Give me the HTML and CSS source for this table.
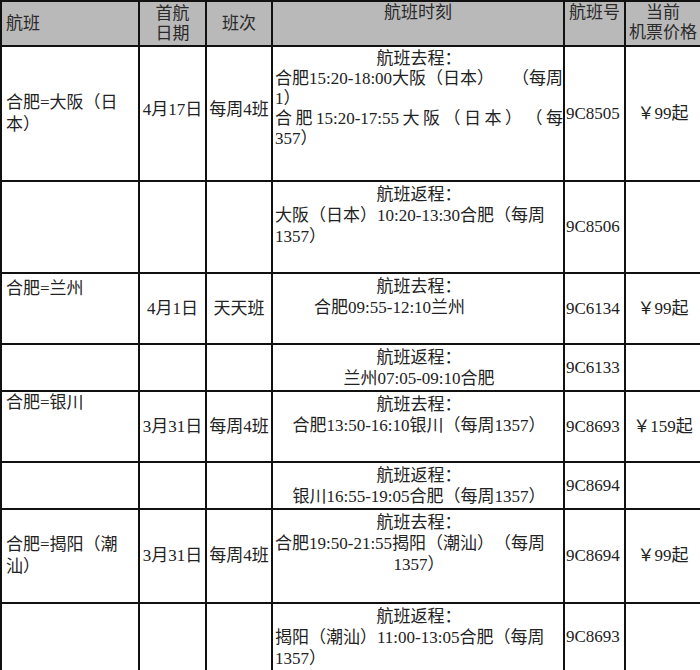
FILE: index.html
```html
<!DOCTYPE html>
<html lang="zh-CN">
<head>
<meta charset="utf-8">
<title>航班时刻表</title>
<link rel="stylesheet" href="styles.css">
</head>
<body>
<table class="sched">
  <colgroup>
    <col class="c-route">
    <col class="c-date">
    <col class="c-freq">
    <col class="c-time">
    <col class="c-no">
    <col class="c-price">
  </colgroup>
  <thead>
    <tr class="h-head">
      <th class="left mid">航班</th>
      <th class="mid">首航<br>日期</th>
      <th class="mid">班次</th>
      <th class="top">航班时刻</th>
      <th class="top">航班号</th>
      <th class="top">当前<br>机票价格</th>
    </tr>
  </thead>
  <tbody>
    <tr class="h-r1">
      <td class="route mid">合肥=大阪（日本）</td>
      <td class="mid up">4月17日</td>
      <td class="mid up">每周4班</td>
      <td class="time tight">
        <div class="ct">航班去程：</div>
        <div class="split"><span>合肥15:20-18:00大阪（日本）</span><span>（每周</span></div>
        <div>1）</div>
        <div class="just">合肥15:20-17:55大阪（日本）（每</div>
        <div>357）</div>
      </td>
      <td class="no mid">9C8505</td>
      <td class="price mid">￥99起</td>
    </tr>
    <tr class="h-r2">
      <td></td>
      <td></td>
      <td></td>
      <td class="time">
        <div class="ct">航班返程：</div>
        <div>大阪（日本）10:20-13:30合肥（每周</div>
        <div>1357）</div>
      </td>
      <td class="no mid">9C8506</td>
      <td></td>
    </tr>
    <tr class="h-r3">
      <td class="route top r-top">合肥=兰州</td>
      <td class="mid">4月1日</td>
      <td class="mid">天天班</td>
      <td class="time">
        <div class="ct">航班去程：</div>
        <div class="ind">合肥09:55-12:10兰州</div>
      </td>
      <td class="no mid">9C6134</td>
      <td class="price mid">￥99起</td>
    </tr>
    <tr class="h-r4">
      <td></td>
      <td></td>
      <td></td>
      <td class="time">
        <div class="ct">航班返程：</div>
        <div class="ct">兰州07:05-09:10合肥</div>
      </td>
      <td class="no mid">9C6133</td>
      <td></td>
    </tr>
    <tr class="h-r5">
      <td class="route top r-top2">合肥=银川</td>
      <td class="mid">3月31日</td>
      <td class="mid">每周4班</td>
      <td class="time">
        <div class="ct">航班去程：</div>
        <div class="ct">合肥13:50-16:10银川（每周1357）</div>
      </td>
      <td class="no mid">9C8693</td>
      <td class="price mid">￥159起</td>
    </tr>
    <tr class="h-r6">
      <td></td>
      <td></td>
      <td></td>
      <td class="time">
        <div class="ct">航班返程：</div>
        <div class="ct">银川16:55-19:05合肥（每周1357）</div>
      </td>
      <td class="no mid">9C8694</td>
      <td></td>
    </tr>
    <tr class="h-r7">
      <td class="route mid">合肥=揭阳（潮汕）</td>
      <td class="mid">3月31日</td>
      <td class="mid">每周4班</td>
      <td class="time">
        <div class="ct">航班去程：</div>
        <div>合肥19:50-21:55揭阳（潮汕）（每周</div>
        <div class="ct">1357）</div>
      </td>
      <td class="no mid">9C8694</td>
      <td class="price mid">￥99起</td>
    </tr>
    <tr class="h-r8">
      <td></td>
      <td></td>
      <td></td>
      <td class="time">
        <div class="ct">航班返程：</div>
        <div>揭阳（潮汕）11:00-13:05合肥（每周</div>
        <div>1357）</div>
      </td>
      <td class="no mid">9C8693</td>
      <td></td>
    </tr>
  </tbody>
</table>
</body>
</html>
```

FILE: styles.css
```css
html, body {
  margin: 0;
  padding: 0;
  background: #ffffff;
}

body {
  font-family: "Liberation Serif", "Noto Sans CJK SC", serif;
  font-size: 17px;
  color: #222222;
  text-spacing-trim: space-all;
}

.sched {
  width: 700px;
  table-layout: fixed;
  border-collapse: collapse;
  border: 2px solid #333333;
}

.c-route { width: 138px; }
.c-date { width: 67px; }
.c-freq { width: 66px; }
.c-time { width: 292px; }
.c-no { width: 61px; }
.c-price { width: 76px; }

.sched th,
.sched td {
  border: 2px solid #111111;
  padding: 0 1px;
  line-height: 20px;
  text-align: center;
  vertical-align: middle;
  overflow: hidden;
}

.sched th {
  background: #b9b9b9;
  font-weight: normal;
  color: #2a2a2a;
  padding-top: 1px;
  padding-bottom: 0;
}

.sched th.left { text-align: left; padding-left: 4px; }
.sched th.top { vertical-align: top; }

.h-head { height: 45px; }
.h-r1 { height: 135px; }
.h-r2 { height: 92px; }
.h-r3 { height: 71px; }
.h-r4 { height: 47px; }
.h-r5 { height: 71px; }
.h-r6 { height: 47px; }
.h-r7 { height: 94px; }
.h-r8 { height: 68px; }

.sched td.route {
  text-align: left;
  padding-left: 4px;
  padding-right: 2px;
  line-height: 22px;
}

.sched td.top { vertical-align: top; }
.sched td.r-top { padding-top: 4px; }
.sched td.r-top2 { padding-top: 0; }
.sched td.up { padding-bottom: 8px; }

.sched td.time {
  vertical-align: top;
  text-align: left;
  padding: 2px 0 0 2px;
  line-height: 21px;
}

.sched td.tight { line-height: 20px; }

.time .ct { text-align: center; }

.time .split {
  display: flex;
  justify-content: space-between;
}

.time .just {
  text-align: justify;
  text-align-last: justify;
}

.time .ind { padding-left: 39px; }

.sched td.no {
  text-align: left;
  padding-left: 1px;
  padding-right: 0;
}

.sched td.price { text-align: center; }
```
